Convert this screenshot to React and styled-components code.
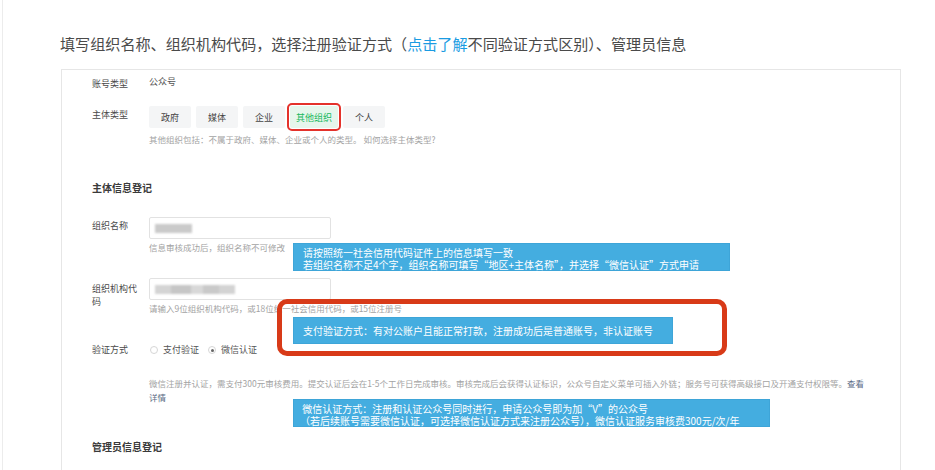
import React from "react";
import styled, { createGlobalStyle } from "styled-components";

const GlobalStyle = createGlobalStyle`
  html, body {
    margin: 0;
    padding: 0;
    background: #fff;
    overflow: hidden;
  }
  body {
    font-family: "Noto Sans CJK SC", "Noto Sans", sans-serif;
  }
`;

const subjectTypes = ["政府", "媒体", "企业", "其他组织", "个人"];

const App = () => {
  return (
    <>
      <GlobalStyle />
      <Page>
        <Intro>
          填写组织名称、组织机构代码，选择注册验证方式（<IntroLink>点击了解</IntroLink>
          不同验证方式区别）、管理员信息
        </Intro>
        <Card>
          <Row $mt={5}>
            <Label>账号类型</Label>
            <Value>公众号</Value>
          </Row>

          <Row $mt={16}>
            <Label>主体类型</Label>
            <TypeButtons>
              {subjectTypes.map((t) => (
                <TypeButton key={t} $active={t === "其他组织"}>
                  {t}
                </TypeButton>
              ))}
            </TypeButtons>
          </Row>
          <Hint $mt={4}>
            其他组织包括：不属于政府、媒体、企业或个人的类型。 如何选择主体类型?
          </Hint>

          <SectionTitle $mt={35}>主体信息登记</SectionTitle>

          <Row $mt={22} $h={22}>
            <Label>组织名称</Label>
            <Field>
              <Blur $w={37} />
            </Field>
          </Row>
          <Hint $mt={1}>信息审核成功后，组织名称不可修改</Hint>

          <Row $mt={24} $h={22}>
            <Label $pt={4}>组织机构代码</Label>
            <Field>
              <Blur $w={80} $striped />
            </Field>
          </Row>
          <Hint $mt={1}>请输入9位组织机构代码，或18位统一社会信用代码，或15位注册号</Hint>

          <Row $mt={28}>
            <Label $pt={0} $lh={14}>
              验证方式
            </Label>
            <RadioGroup>
              <RadioOption>
                <RadioDot />
                支付验证
              </RadioOption>
              <RadioOption>
                <RadioDot $checked />
                微信认证
              </RadioOption>
            </RadioGroup>
          </Row>
          <Hint $mt={19}>
            微信注册并认证，需支付300元审核费用。提交认证后会在1-5个工作日完成审核。审核完成后会获得认证标识，公众号自定义菜单可插入外链；服务号可获得高级接口及开通支付权限等。
            <HintLink>查看</HintLink>
            <br />
            <HintLink>详情</HintLink>
          </Hint>

          <SectionTitle $mt={36}>管理员信息登记</SectionTitle>

          {/* annotations laid over the form */}
          <Callout $left={231} $top={173} $width={437} $height={28}>
            请按照统一社会信用代码证件上的信息填写一致
            <br />
            若组织名称不足4个字，组织名称可填写“地区+主体名称”，并选择“微信认证”方式申请
          </Callout>
          <Highlight />
          <Callout $left={231} $top={247} $width={380} $height={27}>
            支付验证方式：有对公账户且能正常打款，注册成功后是普通账号，非认证账号
          </Callout>
          <Callout $left={231} $top={329} $width={477} $height={28} $pl={6}>
            &nbsp;微信认证方式：注册和认证公众号同时进行，申请公众号即为加“V”的公众号
            <br />
            （若后续账号需要微信认证，可选择微信认证方式来注册公众号），微信认证服务审核费300元/次/年
          </Callout>
        </Card>
      </Page>
    </>
  );
};

export default App;

const Page = styled.div`
  margin-left: 2px;
  min-height: 100vh;
  border-left: 1px solid #ececec;
  padding-left: 57px;
  box-sizing: border-box;
`;

const Intro = styled.h2`
  margin: 0;
  padding-top: 33px;
  font-size: 15.1px;
  line-height: 20px;
  font-weight: normal;
  color: #4a4a4a;
  white-space: nowrap;
`;

const IntroLink = styled.span`
  color: #1a9be2;
`;

const Card = styled.div`
  position: relative;
  margin-top: 16px;
  margin-left: 1px;
  width: 840px;
  height: 430px;
  box-sizing: border-box;
  border: 1px solid #e6e6e6;
  padding: 0 0 0 30px;
`;

const Row = styled.div`
  display: flex;
  align-items: flex-start;
  margin-top: ${({ $mt }) => $mt}px;
  height: ${({ $h }) => ($h ? `${$h}px` : "auto")};
`;

const Label = styled.div`
  width: 50px;
  margin-right: 7px;
  flex-shrink: 0;
  padding-top: ${({ $pt = 2 }) => $pt}px;
  font-size: 9px;
  line-height: ${({ $lh = 13 }) => $lh}px;
  color: #4a4a4a;
`;

const Value = styled.div`
  font-size: 9px;
  line-height: 14px;
  color: #555;
`;

const TypeButtons = styled.div`
  display: flex;
  gap: 5px;
`;

const TypeButton = styled.div`
  min-width: 42px;
  height: 22px;
  padding: 0 6px;
  box-sizing: border-box;
  display: flex;
  align-items: center;
  justify-content: center;
  border-radius: 2px;
  font-size: 9px;
  background: ${({ $active }) => ($active ? "#e6f6ec" : "#f4f5f6")};
  color: ${({ $active }) => ($active ? "#17b85c" : "#444")};
  outline: ${({ $active }) => ($active ? "2px solid #e4322b" : "none")};
  outline-offset: 1px;
`;

const Hint = styled.div`
  margin-top: ${({ $mt }) => $mt}px;
  padding-left: 57px;
  font-size: 8.5px;
  line-height: 14px;
  color: #a3a3a3;
  white-space: nowrap;
`;

const HintLink = styled.span`
  color: #5b6b85;
`;

const SectionTitle = styled.div`
  margin-top: ${({ $mt }) => $mt}px;
  font-size: 10px;
  line-height: 14px;
  font-weight: bold;
  color: #3a3a3a;
`;

const Field = styled.div`
  width: 182px;
  height: 22px;
  box-sizing: border-box;
  border: 1px solid #e2e2e2;
  border-radius: 2px;
  background: #fff;
  display: flex;
  align-items: center;
  padding-left: 5px;
`;

const Blur = styled.div`
  width: ${({ $w }) => $w}px;
  height: 9px;
  background: ${({ $striped }) =>
    $striped
      ? "linear-gradient(90deg, #d4d4d4 0 20%, #c6c6c6 20% 45%, #d8d8d8 45% 60%, #c9c9c9 60% 80%, #d3d3d3 80%)"
      : "#cacaca"};
  filter: blur(1px);
`;

const RadioGroup = styled.div`
  display: flex;
  gap: 8px;
`;

const RadioOption = styled.label`
  display: flex;
  align-items: center;
  gap: 5px;
  font-size: 9px;
  line-height: 14px;
  color: #555;
`;

const RadioDot = styled.span`
  width: 8px;
  height: 8px;
  box-sizing: border-box;
  border: 1px solid #d6d6d6;
  border-radius: 50%;
  margin-left: 1px;
  display: flex;
  align-items: center;
  justify-content: center;
  &::after {
    content: "";
    width: 3px;
    height: 3px;
    border-radius: 50%;
    background: ${({ $checked }) => ($checked ? "#666" : "transparent")};
  }
`;

const Callout = styled.div`
  position: absolute;
  left: ${({ $left }) => $left}px;
  top: ${({ $top }) => $top}px;
  width: ${({ $width }) => $width}px;
  height: ${({ $height }) => $height}px;
  box-sizing: border-box;
  padding-left: ${({ $pl = 9 }) => $pl}px;
  padding-top: ${({ $height }) => ($height === 27 ? 7 : 3)}px;
  background: #44ade0;
  border: 1px solid #3ea5d8;
  color: #fff;
  font-size: 10px;
  line-height: 11.5px;
  white-space: nowrap;
`;

const Highlight = styled.div`
  position: absolute;
  left: 215px;
  top: 229px;
  width: 450px;
  height: 57px;
  box-sizing: border-box;
  border: 5px solid #d83a18;
  border-radius: 10px;
`;
